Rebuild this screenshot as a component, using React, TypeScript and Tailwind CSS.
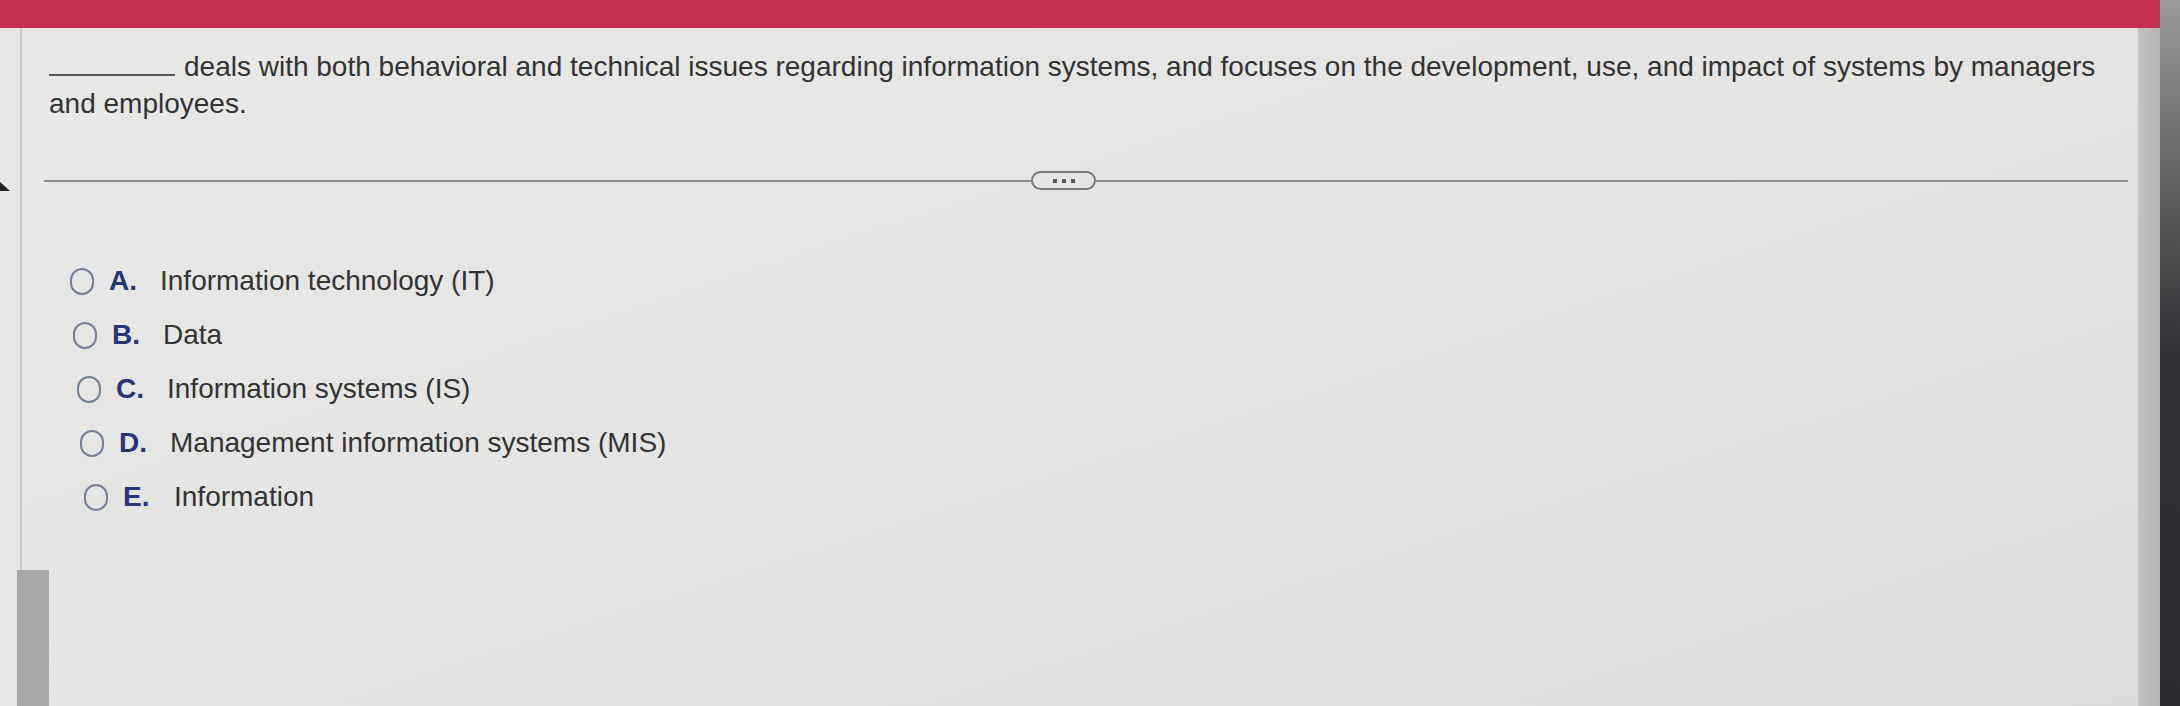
import React from 'react';

const options = [
  { letter: 'A.', text: 'Information technology (IT)', shift: 'pl-[0px]' },
  { letter: 'B.', text: 'Data', shift: 'pl-[3px]' },
  { letter: 'C.', text: 'Information systems (IS)', shift: 'pl-[7px]' },
  { letter: 'D.', text: 'Management information systems (MIS)', shift: 'pl-[10px]' },
  { letter: 'E.', text: 'Information', shift: 'pl-[14px]' },
];

const Radio: React.FC = () => (
  <span className="block w-[24px] h-[27px] rounded-full border-[2.5px] border-[#72809a] shrink-0" />
);

export default function App() {
  return (
    <div className="relative w-[2180px] h-[706px] overflow-hidden flex bg-[#d8d8d6] font-['Liberation_Sans',Arial,sans-serif]">
      <div className="flex-1 flex flex-col">
        {/* top bar */}
        <div className="h-[28px] bg-[#c5304f] shrink-0" />

        <div className="flex-1 flex">
          {/* left margin */}
          <div className="relative w-[22px] bg-[#e6e6e4] border-r-2 border-[#c9c9c7]">
            <div className="absolute left-0 top-[154px] w-0 h-0 border-l-[10px] border-l-[#222] border-t-[9px] border-t-transparent" />
          </div>

          {/* main panel */}
          <div className="flex-1 bg-gradient-to-br from-[#e8e8e6] via-[#e4e4e2] to-[#dbdbd9] flex flex-col">
            <p className="pt-[20px] pl-[27px] text-[28px] leading-[37px] text-[#333]">
              <span className="inline-block w-[126px] border-b-2 border-[#555] align-baseline mr-[9px]" />
              deals with both behavioral and technical issues regarding information systems, and focuses on the development, use, and impact of systems by managers
              <br />
              and employees.
            </p>

            <div className="mt-[49px] ml-[22px] mr-[10px] flex items-center h-[19px]">
              <div className="w-[987px] h-[2px] bg-[#8d8d8b]" />
              <div className="w-[65px] h-[19px] rounded-full border-2 border-[#7a7a78] flex items-center justify-center gap-[5px]">
                <span className="w-[4px] h-[4px] bg-[#555]" />
                <span className="w-[4px] h-[4px] bg-[#555]" />
                <span className="w-[4px] h-[4px] bg-[#555]" />
              </div>
              <div className="flex-1 h-[2px] bg-[#8d8d8b]" />
            </div>

            <ul className="mt-[64px] ml-[48px] flex flex-col">
              {options.map((o) => (
                <li key={o.letter} className={`h-[54px] flex items-center ${o.shift}`}>
                  <Radio />
                  <span className="ml-[15px] w-[51px] text-[28px] font-bold text-[#26367a]">{o.letter}</span>
                  <span className="text-[28px] text-[#333]">{o.text}</span>
                </li>
              ))}
            </ul>
          </div>

          {/* monitor bezel */}
          <div className="w-[22px] bg-gradient-to-r from-[#c4c4c2] to-[#b3b3b1]" />
        </div>
      </div>
      <div className="w-[20px] bg-gradient-to-b from-[#9a9a98] via-[#2f3134] to-[#2a2c2f]" />

      {/* scrollbar thumb at the lower left edge */}
      <div className="absolute left-[17px] top-[570px] w-[32px] h-[136px] bg-[#a9a9a7]" />
    </div>
  );
}
